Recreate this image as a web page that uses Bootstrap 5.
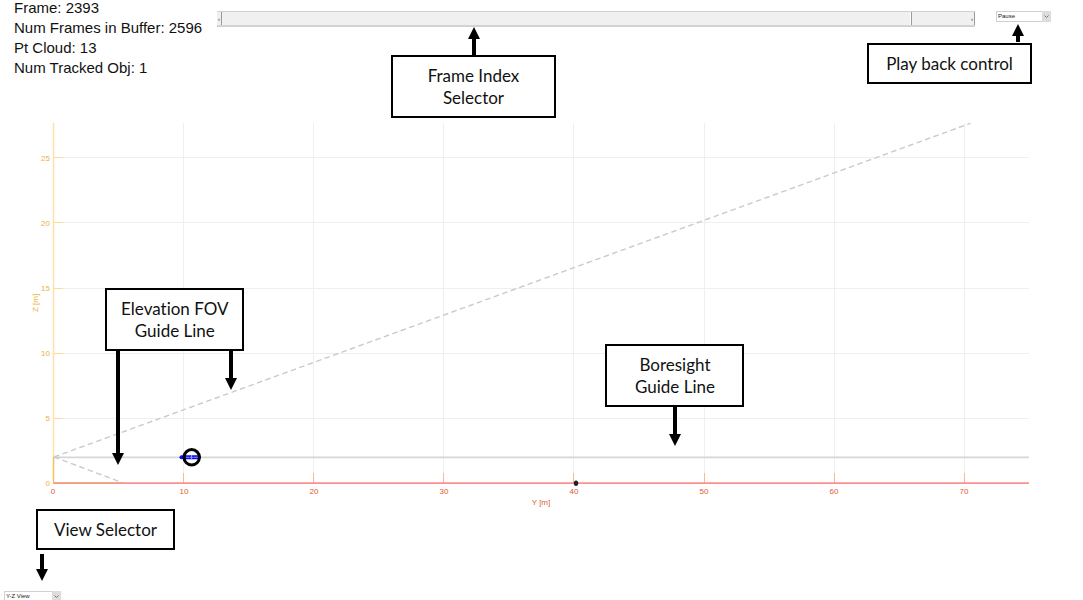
<!DOCTYPE html>
<html lang="en">
<head>
<meta charset="utf-8">
<meta name="viewport" content="width=device-width, initial-scale=1">
<title>Point cloud playback</title>
<link href="https://cdn.jsdelivr.net/npm/bootstrap@5.3.0/dist/css/bootstrap.min.css" rel="stylesheet">
<style>
  body { font-family: "Liberation Sans", Arial, sans-serif; color: #111; background: #fff; }
  .topbar { height: 84px; padding-right: 32px; }
  .readout { width: 217px; padding-left: 14px; margin-top: -2px; font-size: 15px; line-height: 20px; white-space: nowrap; }
  .scroller { height: 16px; margin-top: 11px; background: #f0f0f0; border: 1px solid #d2d2d2; border-width: 1px 0 2px; }
  .step { width: 5px; border: 0; border-right: 1px solid #999; padding: 0; background: #f0f0f0; font-size: 6px; line-height: 10px; color: #222; }
  .frame-range { appearance: none; min-width: 0; height: 13px; margin: 0; background: transparent; }
  .frame-range::-webkit-slider-thumb { appearance: none; width: 2px; height: 13px; background: #fff; border-right: 1px solid #999; }
  .frame-range::-moz-range-thumb { width: 2px; height: 13px; border: 0; border-right: 1px solid #999; border-radius: 0; background: #fff; }
  .mini { height: 11px; font-size: 6px; line-height: 9px; }
  .mini select { appearance: none; display: block; width: 100%; height: 100%; border: 1px solid #d0d0d0; border-radius: 0; padding: 0 0 0 1px; background: #fff; color: #222; }
  .mini svg { position: absolute; right: 0; top: 0; width: 9px; height: 11px; pointer-events: none; }
  .playback { width: 55px; margin: 11px 0 0 21px; }
  .view { width: 57px; margin: 77px 0 0 4px; }
  .callout { position: absolute; z-index: 2; color: #111; font-family: Lato, Carlito, sans-serif; font-size: 17px; line-height: 22px; text-align: center; font-variant-ligatures: none; }
  .callout-text { background: #fff; border: 2px solid #000; padding: 8px 0 7px; }
  .wide { width: 165px; }
  .slim { width: 139px; }
  .arrow { display: flex; flex-direction: column; align-items: center; width: 12px; height: 39px; }
  .arrow::before { content: ""; width: 4px; flex: 1; background: #000; }
  .arrow::after { content: ""; border: 6px solid transparent; border-top: 12px solid #000; border-bottom: 0; }
  .arrow.up { transform: rotate(180deg); height: 28px; }
  .arrow.short { height: 18px; }
  .arrow.mid { height: 27px; }
  .arrow.long { height: 114px; }
  .at-frame { left: 174px; top: 27px; }
  .at-play { right: 19px; top: 24px; }
  .at-play .arrow { margin-left: 145px; margin-bottom: 1px; }
  .at-fov { left: 10%; top: 204px; margin-left: -3px; }
  .fov-arrows { padding: 0 7px; }
  .at-bore { left: 56%; top: 260px; margin-left: -1px; }
  .at-view { left: 36px; top: 425px; }
  .plot text { font-size: 8px; }
</style>
</head>
<body>
<main class="vh-100 overflow-hidden">
  <header class="topbar d-flex align-items-start">
    <div class="readout flex-shrink-0">
      <div>Frame: 2393</div>
      <div>Num Frames in Buffer: 2596</div>
      <div>Pt Cloud: 13</div>
      <div>Num Tracked Obj: 1</div>
    </div>
    <div class="position-relative flex-grow-1">
      <div class="scroller d-flex">
        <button class="step" type="button" aria-label="Previous frame">‹</button>
        <input class="frame-range flex-grow-1" type="range" min="1" max="2596" value="2393" aria-label="Frame index">
        <button class="step" type="button" aria-label="Next frame">›</button>
      </div>
      <div class="callout wide at-frame d-flex flex-column align-items-center">
        <div class="arrow up"></div>
        <div class="callout-text w-100">Frame Index<br>Selector</div>
      </div>
    </div>
    <div class="playback position-relative">
      <div class="mini position-relative">
        <select aria-label="Playback"><option>Pause</option><option>Play</option></select>
        <svg viewBox="0 0 9 11"><path d="M0 0H9V11H0Z" fill="#ddd"/><path d="M2.500 4.500 4.500 6.500 6.500 4.500" fill="none" stroke="#777"/></svg>
      </div>
    </div>
    <div class="position-relative">
      <div class="callout wide at-play">
        <div class="arrow up short"></div>
        <div class="callout-text">Play back control</div>
      </div>
    </div>
  </header>

  <section class="plot position-relative">
    <svg class="d-block w-100" viewBox="0 84 1083 430" role="img" aria-label="Y-Z plot">
      <g stroke="#efefef" fill="none">
        <path d="M183.500 123V483M313.500 123V483M443.500 123V483M573.500 123V483M704.500 123V483M834.500 123V483M964.500 123V483"/>
        <path d="M54 157.500H1029M54 222.500H1029M54 288.500H1029M54 353.500H1029M54 418.500H1029"/>
      </g>
      <path d="M53.500 123V457" stroke="#fde3a8" stroke-width="1.500"/>
      <path d="M54 157.500H63M54 222.500H63M54 288.500H63M54 353.500H63M54 418.500H63" stroke="#fbdc98"/>
      <path d="M54 457.300H1029" stroke="#d6d6d6" stroke-width="1.700"/>
      <path d="M54 457 970.500 123.300M54 457 122 482.500" fill="none" stroke="#cacaca" stroke-width="1.400" stroke-dasharray="5.500 3.500"/>
      <path d="M183.500 473V483M313.500 473V483M443.500 473V483M573.500 473V483M704.500 473V483M834.500 473V483M964.500 473V483" stroke="#f8b79f"/>
      <path d="M53 483.200H1029" stroke="#ff8f8f" stroke-width="1.800"/>
      <path d="M53 483.200H122" stroke="#f0a184" stroke-width="1.800"/>
      <path d="M53.500 457V483" stroke="#f4c05c" stroke-width="1.500"/>
      <ellipse cx="576" cy="483.200" rx="2.200" ry="2.700" fill="#222"/>
      <path d="M181.500 457.300H199" stroke="#0b0bff" stroke-width="4" stroke-linecap="round"/>
      <path d="M186 457.300H189M194 457.300H198M191.500 455V459.500M189.500 457.300H193.500" stroke="#9a9ad0" fill="none"/>
      <circle cx="191.700" cy="457.300" r="7.700" fill="none" stroke="#000" stroke-width="3"/>
      <g fill="#f0b040" text-anchor="end">
        <text x="50" y="161">25</text><text x="50" y="226">20</text><text x="50" y="291">15</text>
        <text x="50" y="356">10</text><text x="50" y="421">5</text><text x="50" y="486">0</text>
        <text transform="translate(38 303) rotate(-90)" text-anchor="middle">Z [m]</text>
      </g>
      <g fill="#df5a30" text-anchor="middle">
        <text x="53" y="494">0</text><text x="184" y="494">10</text><text x="314" y="494">20</text>
        <text x="444" y="494">30</text><text x="574" y="494">40</text><text x="704" y="494">50</text>
        <text x="834" y="494">60</text><text x="964" y="494">70</text><text x="541" y="505">Y [m]</text>
      </g>
    </svg>
    <div class="callout slim at-fov">
      <div class="callout-text">Elevation FOV<br>Guide Line</div>
      <div class="fov-arrows d-flex justify-content-between align-items-start">
        <div class="arrow long"></div>
        <div class="arrow"></div>
      </div>
    </div>
    <div class="callout slim at-bore d-flex flex-column align-items-center">
      <div class="callout-text w-100">Boresight<br>Guide Line</div>
      <div class="arrow"></div>
    </div>
    <div class="callout slim at-view">
      <div class="callout-text">View Selector</div>
      <div class="arrow mid mt-1"></div>
    </div>
  </section>

  <footer class="view mini position-relative">
    <select aria-label="View"><option>Y-Z View</option><option>X-Y View</option><option>3D View</option></select>
    <svg viewBox="0 0 9 11"><path d="M0 0H9V11H0Z" fill="#ddd"/><path d="M2.500 4.500 4.500 6.500 6.500 4.500" fill="none" stroke="#777"/></svg>
  </footer>
</main>
<script src="https://cdn.jsdelivr.net/npm/bootstrap@5.3.0/dist/js/bootstrap.bundle.min.js"></script>
</body>
</html>
